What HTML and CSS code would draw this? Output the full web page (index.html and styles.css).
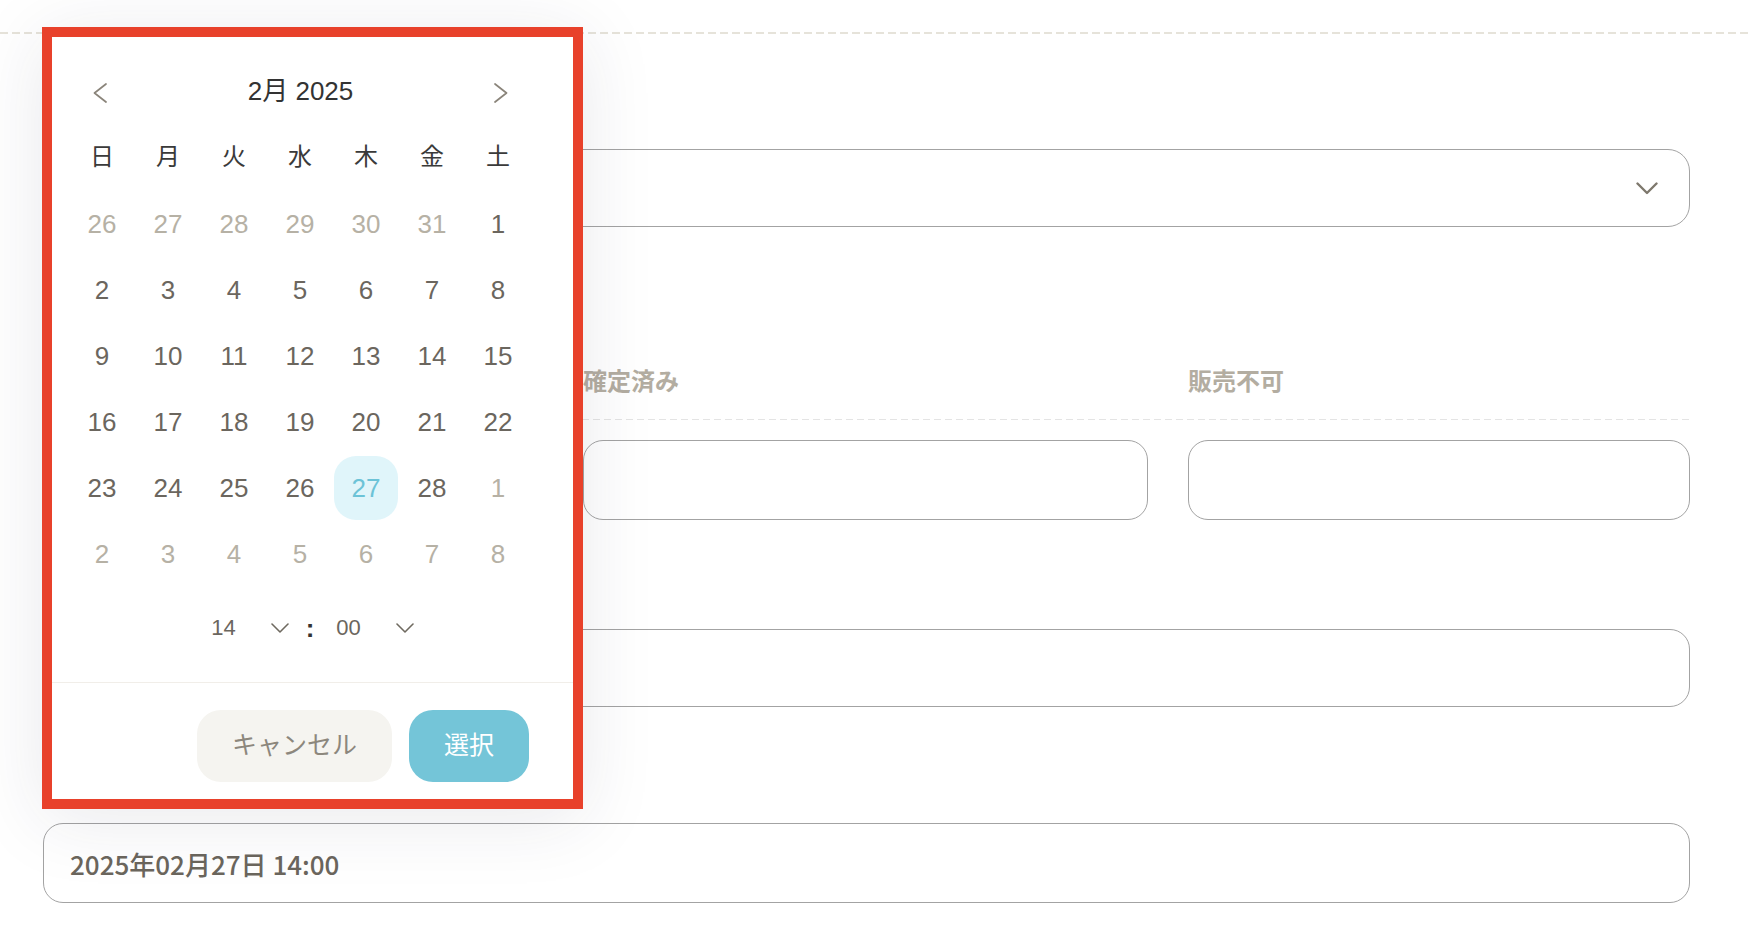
FILE: index.html
```html
<!DOCTYPE html>
<html lang="ja">
<head>
    <meta charset="UTF-8">
    <meta name="viewport" content="width=device-width, initial-scale=1.0">
    <title>在庫設定</title>
    <link rel="stylesheet" href="styles.css">
    <script>
        document.addEventListener('DOMContentLoaded', () => {
            const year = 2025;
            const month = 1;
            const selectedDay = 27;
            const days = document.getElementById('days');
            const offset = new Date(year, month, 1).getDay();

            for (let i = 0; i < 42; i++) {
                const d = new Date(year, month, 1 - offset + i);
                const cell = document.createElement('div');
                cell.classList.add('day');
                if (d.getMonth() !== month) {
                    cell.classList.add('other');
                } else if (d.getDate() === selectedDay) {
                    cell.classList.add('selected');
                }
                cell.innerHTML = `<span>${d.getDate()}</span>`;
                days.appendChild(cell);
            }
        });
    </script>
</head>
<body>
    <div class="page">
        <div class="divider"></div>
        <form class="form">
            <div class="select-box">
                <svg class="select-arrow" width="22" height="13" viewBox="0 0 22 13"><path d="M1.5 1.5 L11 11 L20.5 1.5" fill="none" stroke="#7e786d" stroke-width="2.4" stroke-linecap="round" stroke-linejoin="round"/></svg>
            </div>

            <div class="stock">
                <div class="stock-head">
                    <span></span>
                    <span>確定済み</span>
                    <span>販売不可</span>
                </div>
                <div class="stock-body">
                    <input type="text" class="text-input">
                    <input type="text" class="text-input">
                    <input type="text" class="text-input">
                </div>
            </div>

            <input type="text" class="text-input wide">
            <input type="text" class="text-input date" value="2025年02月27日 14:00" readonly>
        </form>

        <div class="picker">
            <div class="cal">
                <div class="cal-head">
                    <button type="button" class="nav-btn">
                        <svg width="14" height="20" viewBox="0 0 14 20"><path d="M13 1 L1.5 10 L13 19" fill="none" stroke="#8a847a" stroke-width="1.7" stroke-linecap="round" stroke-linejoin="round"/></svg>
                    </button>
                    <div class="cal-title">2月 2025</div>
                    <button type="button" class="nav-btn">
                        <svg width="14" height="20" viewBox="0 0 14 20"><path d="M1 1 L12.5 10 L1 19" fill="none" stroke="#8a847a" stroke-width="1.7" stroke-linecap="round" stroke-linejoin="round"/></svg>
                    </button>
                </div>
                <div class="cal-grid">
                    <div class="weekday">日</div>
                    <div class="weekday">月</div>
                    <div class="weekday">火</div>
                    <div class="weekday">水</div>
                    <div class="weekday">木</div>
                    <div class="weekday">金</div>
                    <div class="weekday">土</div>
                </div>
                <div class="cal-grid" id="days"></div>
            </div>

            <div class="time-row">
                <div class="time-select">
                    <span>14</span>
                    <svg width="18" height="10" viewBox="0 0 18 10"><path d="M1 1 L9 9 L17 1" fill="none" stroke="#6f6a60" stroke-width="1.6" stroke-linecap="round" stroke-linejoin="round"/></svg>
                </div>
                <span class="time-sep">:</span>
                <div class="time-select">
                    <span>00</span>
                    <svg width="18" height="10" viewBox="0 0 18 10"><path d="M1 1 L9 9 L17 1" fill="none" stroke="#6f6a60" stroke-width="1.6" stroke-linecap="round" stroke-linejoin="round"/></svg>
                </div>
            </div>

            <div class="picker-foot">
                <button type="button" class="cancel-button">キャンセル</button>
                <button type="button" class="ok-button">選択</button>
            </div>
        </div>
    </div>
</body>
</html>
```

FILE: styles.css
```css
* {
    box-sizing: border-box;
}
body {
    margin: 0;
    padding: 0;
    background-color: #fff;
    font-family: "Liberation Sans", "Noto Sans CJK JP", sans-serif;
    color: #6b665e;
}
.page {
    position: relative;
    min-height: 938px;
    padding-top: 32px;
}
.divider {
    height: 2px;
    background: repeating-linear-gradient(90deg, #e6e3da 0 8px, transparent 8px 12px);
}
.form {
    display: flex;
    flex-direction: column;
    padding: 0 58px 0 43px;
}
.select-box {
    margin-top: 115px;
    height: 78px;
    border: 1.5px solid #a3a3a3;
    border-radius: 22px;
    display: flex;
    align-items: center;
    justify-content: flex-end;
    padding-right: 31px;
}
.stock {
    margin-top: 137px;
}
.stock-head,
.stock-body {
    display: grid;
    grid-template-columns: 500px 565px 1fr;
    column-gap: 40px;
}
.stock-head {
    height: 56px;
    padding-bottom: 25px;
    font-family: "Noto Sans CJK JP", sans-serif;
    font-size: 24px;
    font-weight: bold;
    line-height: 31px;
    color: #b3ada1;
    background: repeating-linear-gradient(90deg, #e4e4e4 0 7px, transparent 7px 11px) left bottom / 100% 1.5px no-repeat;
}
.stock-body {
    margin-top: 20px;
}
.text-input {
    display: block;
    width: 100%;
    height: 80px;
    border: 1.5px solid #a3a3a3;
    border-radius: 20px;
    background: #fff;
    padding: 0 26px;
    font-family: "Noto Sans CJK JP", sans-serif;
    font-size: 26px;
    font-weight: 500;
    color: #6b665d;
    outline: none;
}
.text-input.wide {
    margin-top: 109px;
    height: 78px;
}
.text-input.date {
    margin-top: 116px;
}

/* date picker popup */
.picker {
    position: absolute;
    left: 42px;
    top: 27px;
    width: 541px;
    height: 782px;
    background: #fff;
    box-shadow: 0 10px 70px rgba(40, 40, 70, 0.1);
    z-index: 10;
}
.picker::after {
    content: '';
    position: absolute;
    inset: 0;
    border: 10px solid #e8412b;
    pointer-events: none;
}
.cal {
    padding: 34px 52px 0 27px;
}
.cal-head {
    height: 64px;
    display: flex;
    align-items: center;
    justify-content: space-between;
    padding: 0 23px 0 24px;
}
.nav-btn {
    border: none;
    background: none;
    padding: 0;
    display: flex;
    cursor: pointer;
}
.cal-title {
    margin-bottom: 9px;
    font-size: 26px;
    color: #333;
}
.cal-grid {
    display: grid;
    grid-template-columns: repeat(7, 66px);
    grid-auto-rows: 66px;
}
.weekday {
    display: flex;
    align-items: center;
    justify-content: center;
    padding-bottom: 7px;
    font-family: "Noto Sans CJK JP", sans-serif;
    font-size: 24px;
    color: #3a3a3a;
}
.day {
    display: flex;
    align-items: center;
    justify-content: center;
    font-size: 26px;
    color: #6b665e;
}
.day span {
    width: 64px;
    height: 64px;
    display: flex;
    align-items: center;
    justify-content: center;
    border-radius: 22px;
}
.day.other {
    color: #b6b1a5;
}
.day.selected span {
    background-color: #e0f5fa;
    color: #6cc3d7;
}
.time-row {
    margin-top: 15px;
    height: 52px;
    display: flex;
    align-items: center;
    justify-content: center;
}
.time-select {
    display: flex;
    align-items: center;
    gap: 35px;
    font-size: 22px;
    color: #6b665e;
}
.time-sep {
    margin: 0 22px 0 17px;
    font-size: 26px;
    font-weight: bold;
    color: #333;
}
.picker-foot {
    margin-top: 28px;
    border-top: 1px solid #f1eee9;
    padding: 27px 54px 27px 0;
    display: flex;
    justify-content: flex-end;
    gap: 17px;
}
.picker-foot button {
    height: 72px;
    border: none;
    border-radius: 24px;
    padding: 0 35px 6px;
    font-family: "Noto Sans CJK JP", sans-serif;
    font-size: 25px;
    cursor: pointer;
}
.cancel-button {
    background-color: #f5f4f0;
    color: #8c877d;
}
.ok-button {
    background-color: #74c5d8;
    color: #fff;
}
```
